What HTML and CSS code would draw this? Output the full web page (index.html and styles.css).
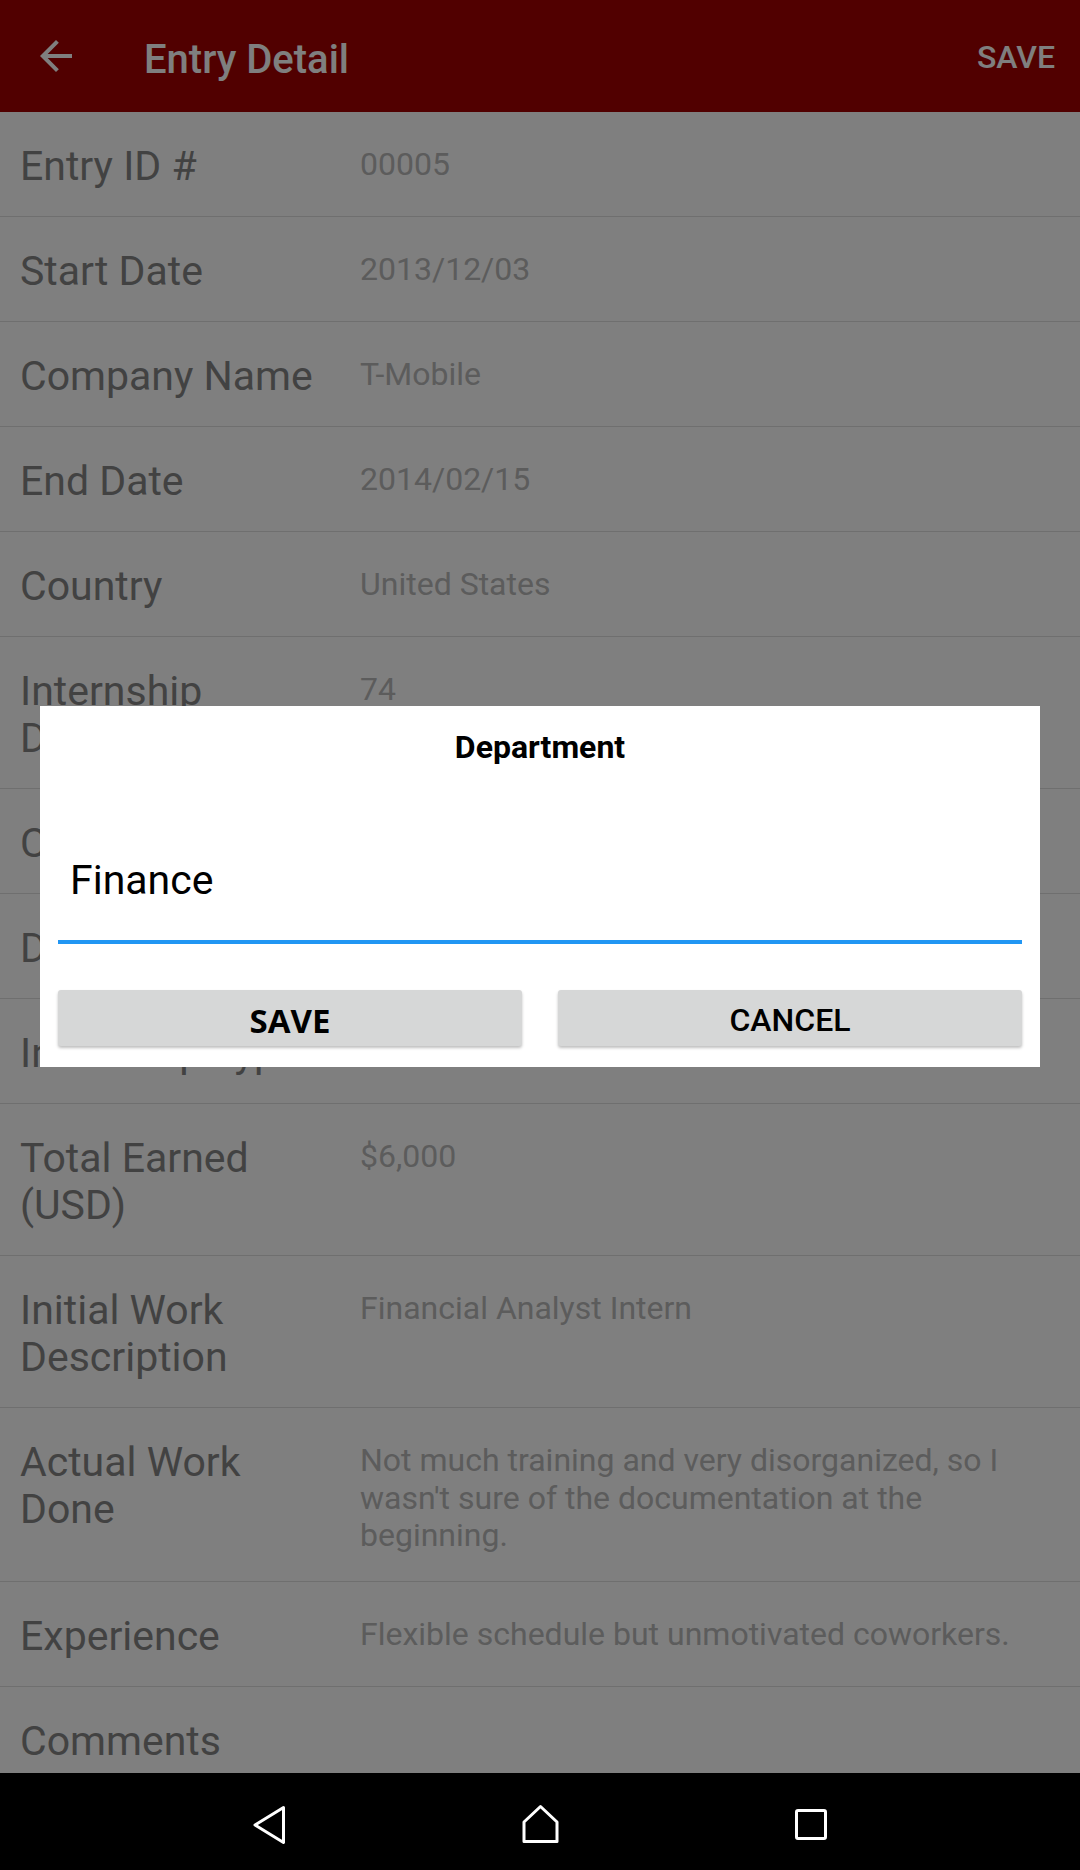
FILE: index.html
```html
<!DOCTYPE html>
<html lang="en">
<head>
    <meta charset="UTF-8">
    <meta name="viewport" content="width=device-width, initial-scale=1.0">
    <title>Entry Detail</title>

    <link rel="stylesheet" href="styles.css">
</head>
<body>

    <div class="phone">

        <div class="app">

            <header class="toolbar">
                <svg class="back" viewBox="0 0 24 24"><path d="M20 11H7.83l5.59-5.59L12 4l-8 8 8 8 1.41-1.41L7.83 13H20v-2z"/></svg>
                <h1 class="title">Entry Detail</h1>
                <span class="action">SAVE</span>
            </header>

            <div class="list">
                <div class="row"><div class="label">Entry ID #</div><div class="value">00005</div></div>
                <div class="row"><div class="label">Start Date</div><div class="value">2013/12/03</div></div>
                <div class="row"><div class="label">Company Name</div><div class="value">T-Mobile</div></div>
                <div class="row"><div class="label">End Date</div><div class="value">2014/02/15</div></div>
                <div class="row"><div class="label">Country</div><div class="value">United States</div></div>
                <div class="row"><div class="label">Internship Duration</div><div class="value">74</div></div>
                <div class="row"><div class="label">City</div><div class="value">Bellevue</div></div>
                <div class="row"><div class="label">Department</div><div class="value">Finance</div></div>
                <div class="row"><div class="label">Internship Type</div><div class="value">Paid</div></div>
                <div class="row"><div class="label">Total Earned (USD)</div><div class="value">$6,000</div></div>
                <div class="row"><div class="label">Initial Work Description</div><div class="value">Financial Analyst Intern</div></div>
                <div class="row"><div class="label">Actual Work Done</div><div class="value">Not much training and very disorganized, so I wasn't sure of the documentation at the beginning.</div></div>
                <div class="row"><div class="label">Experience</div><div class="value">Flexible schedule but unmotivated coworkers.</div></div>
                <div class="row"><div class="label">Comments</div><div class="value"></div></div>
            </div>

            <!-- edit dialog over the dimmed screen -->
            <div class="scrim">
                <div class="dialog">
                    <div class="dialog-title">Department</div>
                    <div class="field">Finance</div>
                    <div class="buttons">
                        <button class="btn btn-save">SAVE</button>
                        <button class="btn btn-cancel">CANCEL</button>
                    </div>
                </div>
            </div>

        </div>

        <nav class="navbar">
            <svg viewBox="0 0 48 48"><path d="M37.5 6.5 L9 24 L37.5 41.5 Z"/></svg>
            <svg viewBox="0 0 48 48"><path d="M8 40.5 V21 L24.5 5.5 L41 21 V40.5 Z"/></svg>
            <svg viewBox="0 0 48 48"><rect x="10.5" y="9.5" width="29" height="28" rx="1.5"/></svg>
        </nav>

    </div>

</body>
</html>
```

FILE: styles.css
```css
body
{
    margin: 0;
    width: 1080px;
    height: 1870px;
    overflow: hidden;
    font-family: Roboto, "Liberation Sans", sans-serif;
}

.phone
{
    display: flex;
    flex-direction: column;
    height: 1870px;
}

.app
{
    flex: 1;
    position: relative;
    display: flex;
    flex-direction: column;
    overflow: hidden;
    background: #ffffff;
}

.toolbar
{
    height: 112px;
    flex-shrink: 0;
    display: flex;
    align-items: center;
    background: #a20000;
    color: #ffffff;
}

.back
{
    width: 48px;
    height: 48px;
    margin-left: 32px;
    fill: #ffffff;
}

.title
{
    margin: 0 0 0 64px;
    padding-top: 6px;
    font-size: 40px;
    font-weight: 500;
    line-height: 47px;
}

.action
{
    margin-left: auto;
    padding: 3px 25px 0 0;
    font-size: 32px;
    font-weight: 500;
    line-height: 37.5px;
}

.list
{
    flex: 1;
    overflow: hidden;
}

.row
{
    display: grid;
    grid-template-columns: 315px 1fr;
    column-gap: 25px;
    padding: 31px 40px 26px 20px;
    border-bottom: 1px solid #dedede;
}

.label
{
    font-size: 41px;
    line-height: 47px;
    color: #858585;
}

.value
{
    margin-top: 3px;
    font-size: 32px;
    line-height: 37.5px;
    color: #b8b8b8;
}

.scrim
{
    position: absolute;
    inset: 0;
    background: rgba(0, 0, 0, 0.5);
    display: flex;
    align-items: center;
    justify-content: center;
}

.dialog
{
    width: 1000px;
    box-sizing: border-box;
    padding: 23px 18px 21px;
    background: #ffffff;
}

.dialog-title
{
    text-align: center;
    font-size: 32px;
    font-weight: 700;
    line-height: 37.5px;
    color: #000000;
}

.field
{
    padding: 91px 12px 36px;
    font-size: 41px;
    line-height: 47px;
    color: #000000;
    border-bottom: 4px solid #2196f3;
}

.buttons
{
    display: grid;
    grid-template-columns: 1fr 1fr;
    column-gap: 36px;
    margin-top: 46px;
}

.btn
{
    height: 56px;
    box-sizing: border-box;
    padding: 5px 0 0;
    border: none;
    border-radius: 3px;
    background: #d6d7d7;
    box-shadow: 0 2px 3px rgba(0, 0, 0, 0.25);
    color: #000000;
    line-height: 51px;
}

.btn-save
{
    font-family: "Open Sans", "Liberation Sans", sans-serif;
    font-size: 33px;
    font-weight: 700;
}

.btn-cancel
{
    font-family: Roboto, "Liberation Sans", sans-serif;
    font-size: 32px;
    font-weight: 500;
}

.navbar
{
    height: 97px;
    flex-shrink: 0;
    box-sizing: border-box;
    padding: 7px 135px 0;
    display: grid;
    grid-template-columns: repeat(3, 1fr);
    align-items: center;
    justify-items: center;
    background: #000000;
}

.navbar svg
{
    width: 48px;
    height: 48px;
    fill: none;
    stroke: #ffffff;
    stroke-width: 3;
    stroke-linejoin: round;
}
```
